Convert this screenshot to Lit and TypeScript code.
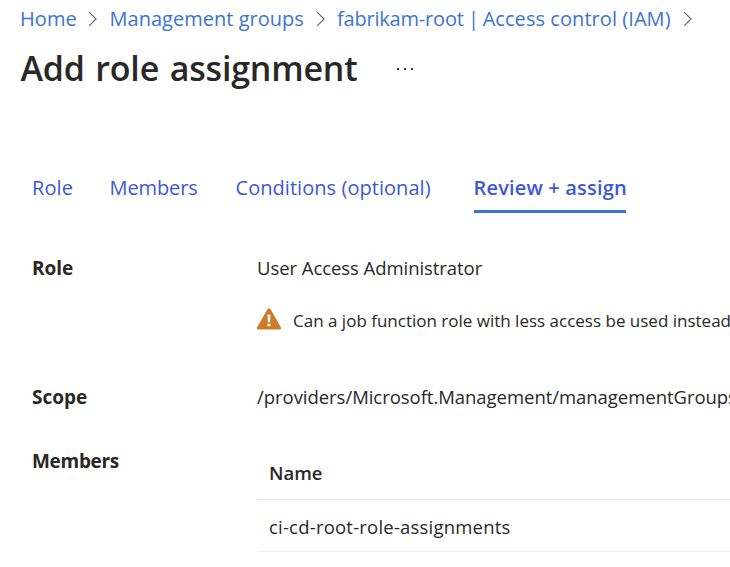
import { LitElement, html, css } from "lit";
import { customElement } from "lit/decorators.js";

const chevron = html`
  <svg class="chevron" width="10" height="16" viewBox="0 0 10 16" aria-hidden="true">
    <path d="M1.2 1.2 8 8 1.2 14.8" fill="none" stroke="#6b6a69" stroke-width="1.2" />
  </svg>
`;

@customElement("app-root")
export class AppRoot extends LitElement {
  static styles = css`
    :host {
      display: block;
      box-sizing: border-box;
      width: 100%;
      height: 567px;
      overflow: hidden;
      padding-top: 5px;
      background: #fff;
      color: #292827;
      font-family: "Open Sans", "Noto Sans", sans-serif;
      font-size: 18.5px;
      line-height: 28px;
      white-space: nowrap;
    }
    .crumbs {
      display: flex;
      align-items: center;
      height: 28px;
      padding-left: 20px;
      font-size: 20px;
      color: #3b74d3;
    }
    .crumbs a { flex: none; }
    .home { width: 68px; letter-spacing: 0.05px; }
    .groups { width: 206.5px; letter-spacing: 0.02px; }
    .iam { width: 346px; letter-spacing: 0.06px; }
    .resource { letter-spacing: -0.2px; }
    .bar { letter-spacing: -0.8px; }
    .chevron { flex: none; display: block; margin-bottom: 1px; }
    .chevron + .groups { margin-left: 11.5px; }
    .chevron + .iam { margin-left: 11px; }
    .heading {
      display: flex;
      align-items: center;
      height: 48px;
      margin-top: 11px;
      padding-left: 20.5px;
    }
    h1 {
      width: 376.5px;
      margin: 0;
      font-size: 34px;
      font-weight: 600;
      line-height: 48px;
      letter-spacing: -0.2px;
      word-spacing: 2px;
    }
    .more { display: flex; gap: 5px; margin-top: 2px; }
    .more i { width: 2px; height: 2px; background: #3d3c3b; }
    .tabs {
      display: flex;
      height: 39px;
      margin-top: 82px;
      padding-left: 32px;
      font-size: 20px;
      color: #3c58d8;
    }
    .tab-role { width: 77.5px; letter-spacing: 0.1px; }
    .tab-members { width: 126px; letter-spacing: -0.1px; }
    .tab-conditions { width: 238.5px; letter-spacing: 0.05px; }
    .tab-review {
      box-sizing: border-box;
      width: 152px;
      border-bottom: 3px solid #3b73cf;
      font-weight: 600;
      letter-spacing: 0.18px;
      text-indent: -0.5px;
    }
    .details {
      display: grid;
      grid-template-columns: 225px 1fr;
      margin: 41px 0 0 32px;
    }
    .label { font-size: 19px; font-weight: 700; letter-spacing: 0; }
    .label.tight { letter-spacing: -0.3px; }
    .role-row { height: 129px; }
    .scope-row { height: 64px; }
    .role-name { letter-spacing: -0.06px; }
    .scope-path { letter-spacing: -0.04px; }
    .warning {
      display: flex;
      align-items: center;
      gap: 11px;
      height: 28px;
      margin-top: 25px;
      font-size: 17px;
    }
    .warning svg { flex: none; margin-bottom: 5px; }
    .table { padding-top: 12px; }
    .cell {
      box-sizing: border-box;
      border-bottom: 1px solid #e9e8e7;
      padding-left: 12px;
    }
    .head { height: 41px; font-weight: 600; }
    .body { height: 52px; padding-top: 13px; border-color: #efeeed; letter-spacing: 0.21px; }
  `;

  render() {
    return html`
      <nav class="crumbs">
        <a class="home">Home</a>${chevron}
        <a class="groups">Management groups</a>${chevron}
        <a class="iam"><span class="resource">fabrikam-root</span><span class="bar"> | </span>Access control (IAM)</a>${chevron}
      </nav>
      <header class="heading">
        <h1>Add role assignment</h1>
        <span class="more"><i></i><i></i><i></i></span>
      </header>
      <nav class="tabs">
        <a class="tab-role">Role</a>
        <a class="tab-members">Members</a>
        <a class="tab-conditions">Conditions (optional)</a>
        <a class="tab-review">Review + assign</a>
      </nav>
      <section class="details">
        <div class="label role-row">Role</div>
        <div>
          <div class="role-name">User Access Administrator</div>
          <div class="warning">
            <svg width="25" height="22" viewBox="0 0 25 22" aria-hidden="true">
              <path
                d="M10.6 1.1Q12 -.8 13.4 1.1L23.8 19.3Q24.5 21.5 22.6 21.5H1.4Q-.5 21.5 .2 19.3Z"
                fill="#cf7a27"
              />
              <path d="M10.5 6.4h3l-.4 7.8h-2.2zM10.5 15.7h3v2.6h-3z" fill="#fff" />
            </svg>
            <span>Can a job function role with less access be used instead</span>
          </div>
        </div>
        <div class="label scope-row">Scope</div>
        <div class="scope-path">/providers/Microsoft.Management/managementGroups</div>
        <div class="label tight">Members</div>
        <div class="table">
          <div class="cell head">Name</div>
          <div class="cell body">ci-cd-root-role-assignments</div>
        </div>
      </section>
    `;
  }
}
